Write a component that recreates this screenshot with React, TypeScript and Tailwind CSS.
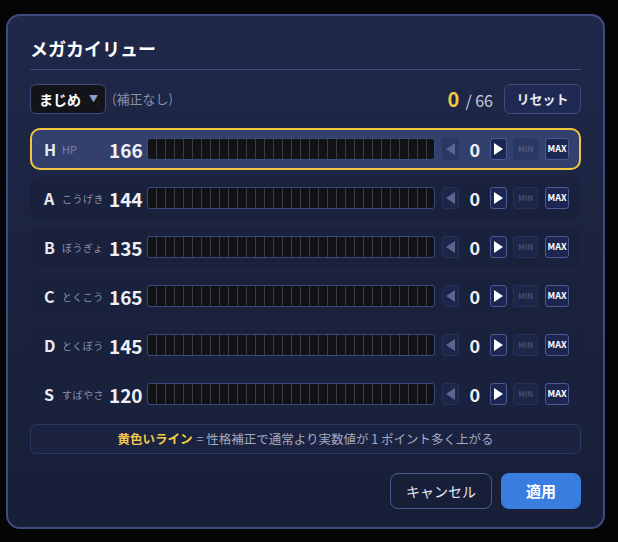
import React from "react";

interface Stat {
  key: string;
  label: string;
  value: number;
}

const stats: Stat[] = [
  { key: "H", label: "HP", value: 166 },
  { key: "A", label: "こうげき", value: 144 },
  { key: "B", label: "ぼうぎょ", value: 135 },
  { key: "C", label: "とくこう", value: 165 },
  { key: "D", label: "とくぼう", value: 145 },
  { key: "S", label: "すばやさ", value: 120 },
];

const segments = Array.from({ length: 32 }, (_, i) => i);

const Triangle = ({ dir, color }: { dir: "left" | "right"; color: string }) => (
  <svg width="9" height="12" viewBox="0 0 9 12">
    {dir === "left" ? (
      <polygon points="9,0 9,12 0,6" fill={color} />
    ) : (
      <polygon points="0,0 9,6 0,12" fill={color} />
    )}
  </svg>
);

const StatRow = ({ stat, active }: { stat: Stat; active: boolean }) => {
  return (
    <div
      className={
        active
          ? "flex h-[42px] items-center rounded-[10px] border-2 border-[#f2c640] bg-[#33406d] pl-[12px] pr-[10px]"
          : "flex h-[42px] items-center rounded-[10px] border-2 border-transparent bg-[#19213d] pl-[12px] pr-[10px]"
      }
    >
      <div className="flex w-[99px] items-center">
        <span className="w-[18px] text-[16px] font-semibold text-[#e8ebf2]">{stat.key}</span>
        <span
          className={
            stat.key === "H"
              ? "text-[11px] text-[#7d87a6]"
              : "text-[10px] tracking-[0.5px] text-[#8a93ad]"
          }
        >
          {stat.label}
        </span>
        <span className="ml-auto text-[19px] font-bold leading-none text-[#eef0f6]">{stat.value}</span>
      </div>
      <div className="ml-[4px] flex h-[22px] w-[290px] overflow-hidden rounded-[3px] border border-[#3b4a7c] bg-[#111216]">
        {segments.map((i) => (
          <div
            key={i}
            className={i === 31 ? "flex-1" : "flex-1 border-r border-[#393c45]"}
          />
        ))}
      </div>
      <button
        className={
          active
            ? "ml-[7px] flex h-[22px] w-[17px] items-center justify-center rounded-[3px] bg-[#2b3763]"
            : "ml-[7px] flex h-[22px] w-[17px] items-center justify-center rounded-[3px] border border-[#27305a] bg-[#1d2646]"
        }
      >
        <Triangle dir="left" color="#5b6790" />
      </button>
      <span className="w-[31px] text-center text-[18px] font-bold text-[#eef0f6]">0</span>
      <button className="flex h-[22px] w-[17px] items-center justify-center rounded-[3px] border border-[#4a5a94] bg-[#1c2650]">
        <Triangle dir="right" color="#ffffff" />
      </button>
      <button
        className={
          active
            ? "ml-[6px] flex h-[22px] w-[25px] items-center justify-center rounded-[3px] bg-[#2b3763] text-[8px] font-bold text-[#4d5882]"
            : "ml-[6px] flex h-[22px] w-[25px] items-center justify-center rounded-[3px] border border-[#27305a] bg-[#1d2646] text-[8px] font-bold text-[#434d72]"
        }
      >
        MIN
      </button>
      <button className="ml-[7px] flex h-[22px] w-[24px] items-center justify-center rounded-[3px] border border-[#4a5a94] bg-[#1c2650] text-[9px] font-bold text-white">
        MAX
      </button>
    </div>
  );
};

export default function App() {
  return (
    <div
      className="min-h-screen bg-[#050506] pl-[6px] pt-[14px]"
      style={{ fontFamily: '"Noto Sans CJK JP", "Noto Sans", sans-serif' }}
    >
      <div className="flex h-[515px] w-[599px] flex-col rounded-[14px] border-2 border-[#3f4c82] bg-gradient-to-b from-[#1f2849] to-[#171e37] px-[22px] pt-[19px]">
        <h2 className="text-[18px] font-bold leading-[26px] text-white">メガカイリュー</h2>
        <div className="mt-[8px] h-px bg-[#3b4a80]" />

        <div className="mt-[14px] flex items-center">
          <div className="flex h-[30px] w-[76px] items-center justify-between rounded-[6px] border border-[#3d4a7c] bg-[#121419] pl-[8px] pr-[7px]">
            <span className="text-[14px] font-bold text-white">まじめ</span>
            <span className="text-[9px] text-[#8ea2cc]">▼</span>
          </div>
          <span className="ml-[6px] text-[13px] text-[#8a90a4]">(補正なし)</span>
          <div className="ml-auto flex items-baseline">
            <span className="text-[20px] font-bold text-[#f5c842]">0</span>
            <span className="ml-[6px] text-[16px] text-[#c8cede]">/ 66</span>
          </div>
          <button className="ml-[11px] h-[30px] w-[77px] rounded-[6px] border border-[#3d4a7c] bg-[#1f2a52] text-[13px] font-bold text-[#e8ebf3]">
            リセット
          </button>
        </div>

        <div className="mt-[14px] flex flex-col gap-[7px]">
          {stats.map((s, i) => (
            <StatRow key={s.key} stat={s} active={i === 0} />
          ))}
        </div>

        <div className="mt-[9px] flex h-[30px] items-center justify-center rounded-[6px] border border-[#2c3760] bg-[#1b2341] text-[12.5px]">
          <span className="font-bold text-[#f2c94c]">黄色いライン</span>
          <span className="ml-[4px] text-[#a3abc3]">= 性格補正で通常より実数値が 1 ポイント多く上がる</span>
        </div>

        <div className="mt-[19px] flex justify-end gap-[9px]">
          <button className="h-[36px] w-[102px] rounded-[8px] border border-[#4a5a8c] text-[14px] text-[#e5e8f0]">
            キャンセル
          </button>
          <button className="h-[36px] w-[80px] rounded-[8px] bg-[#3a7de0] text-[15px] font-bold text-white">
            適用
          </button>
        </div>
      </div>
    </div>
  );
}
